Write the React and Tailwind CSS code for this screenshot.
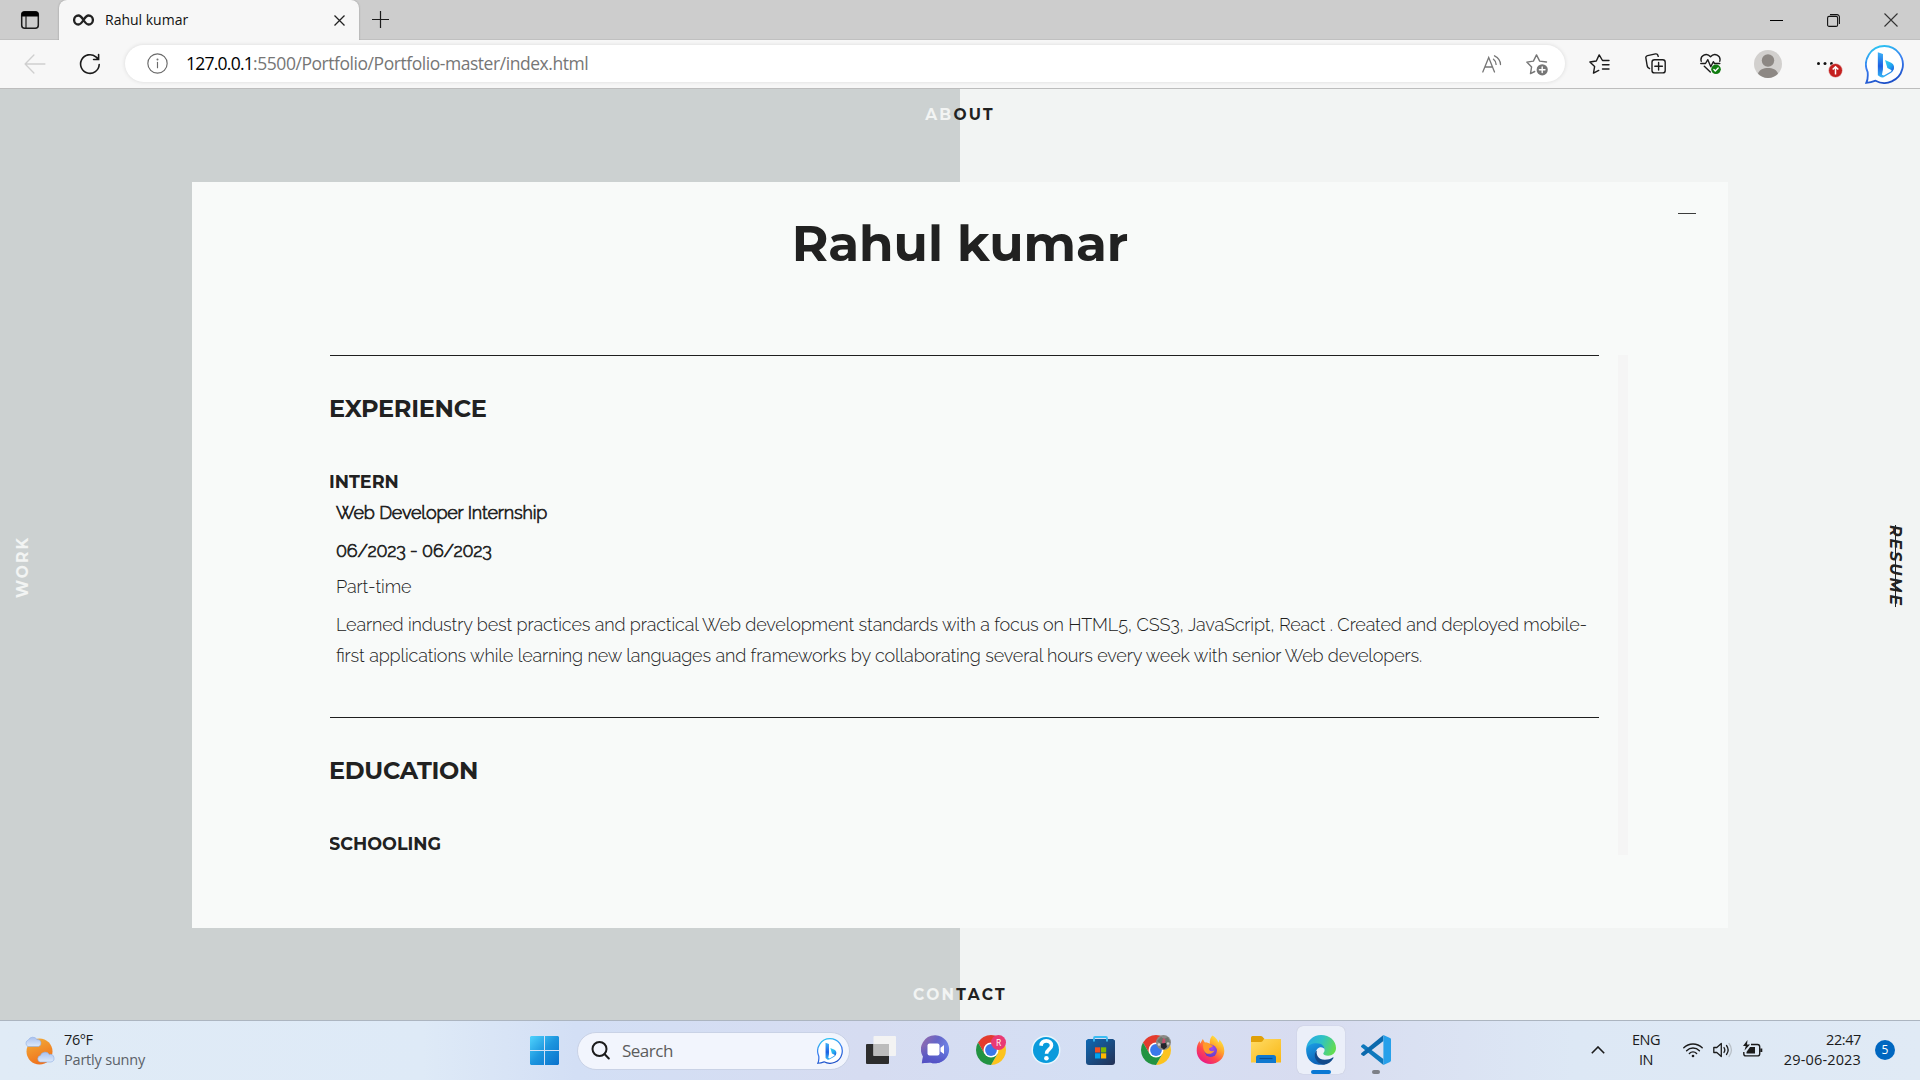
import React, { useId } from "react";

function Line({ size = 20, sw = 1.3, className = "", children }) {
  return (
    <svg width={size} height={size} viewBox="0 0 20 20" fill="none" stroke="currentColor" strokeWidth={sw} strokeLinecap="round" strokeLinejoin="round" className={"shrink-0 " + className}>
      {children}
    </svg>
  );
}

function BingBubble({ size, className = "" }) {
  const id = useId();
  return (
    <svg width={size} height={size} viewBox="0 0 38 38" className={"shrink-0 " + className}>
      <defs>
        <linearGradient id={id + "a"} x1="0.2" y1="0" x2="0.5" y2="1">
          <stop offset="0" stopColor="#2bc8f2" />
          <stop offset="0.5" stopColor="#3a7df0" />
          <stop offset="1" stopColor="#1d50c8" />
        </linearGradient>
        <linearGradient id={id + "b"} x1="0" y1="0" x2="0" y2="1">
          <stop offset="0" stopColor="#3db4f8" />
          <stop offset="0.55" stopColor="#1d5fe2" />
          <stop offset="1" stopColor="#35b8f5" />
        </linearGradient>
        <linearGradient id={id + "c"} x1="0" y1="0" x2="1" y2="1">
          <stop offset="0" stopColor="#35d3ec" />
          <stop offset="0.6" stopColor="#22a8f0" />
          <stop offset="1" stopColor="#1c58dd" />
        </linearGradient>
      </defs>
      <path d="M19 1a18 18 0 1 1-8.7 33.8C7.500 36 4.500 36.800 1.200 36.900 3 34 3 31.500 2.600 26.500A18 18 0 0 1 19 1z" fill="#fff" stroke={`url(#${id}a)`} strokeWidth="1.8" />
      <path d="M12.500 7l5 1.800v15l-1 5.200 1.800.8 7-4 2.500-5.300c.8 3-.2 5.400-2.700 6.900l-6.500 3.700c-1.500.8-2.800.7-4-.2l-2.100-1.500z" fill={`url(#${id}b)`} />
      <path d="M19.500 14.500l6 2.800c3 1.600 3.500 4.800 1.500 7.800l-5.200-2.600z" fill={`url(#${id}c)`} />
    </svg>
  );
}

function Chrome({ children }) {
  return (
    <svg width="30" height="30" viewBox="0 0 30 30">
      <path d="M2.010 7.500A15 15 0 0 1 27.990 7.500H15V15L8.500 18.750z" fill="#e33b2e" />
      <path d="M27.990 7.500A15 15 0 0 1 15 30L21.500 18.750 15 15V7.500z" fill="#fcc31e" />
      <path d="M15 30A15 15 0 0 1 2.010 7.500L8.500 18.750 15 15 21.500 18.750z" fill="#229342" />
      <circle cx="15" cy="15" r="7.500" fill="#fff" />
      <circle cx="15" cy="15" r="5.900" fill="#3a78ea" />
      {children}
    </svg>
  );
}

function WindowsStart() {
  return (
    <svg width="29" height="29" viewBox="0 0 29 29">
      <defs>
        <linearGradient id="win" x1="0" y1="0" x2="29" y2="29" gradientUnits="userSpaceOnUse">
          <stop offset="0" stopColor="#4fd3fd" />
          <stop offset="0.5" stopColor="#1c95de" />
          <stop offset="1" stopColor="#0a71cc" />
        </linearGradient>
      </defs>
      <path d="M1 0H14v14H0V1zM15 0h13L29 1V14H15zM0 15h14v14H1L0 28zM15 15h14v13L28 29H15z" fill="url(#win)" />
    </svg>
  );
}

function TaskView() {
  return (
    <svg width="30" height="28" viewBox="0 0 30 28">
      <rect x="0" y="8" width="23" height="20" rx="1" fill="#2d2d2d" />
      <rect x="7.500" y="0" width="22.500" height="20" rx="1" fill="#f3f3f3" />
      <rect x="7.500" y="8" width="15.500" height="12" fill="#bcbcbc" />
    </svg>
  );
}

function TeamsChat() {
  return (
    <svg width="29" height="29" viewBox="0 0 29 29">
      <defs>
        <linearGradient id="teams" x1="0" y1="0" x2="1" y2="0.6">
          <stop offset="0" stopColor="#9c6aa6" />
          <stop offset="0.5" stopColor="#6666c8" />
          <stop offset="1" stopColor="#6f8df0" />
        </linearGradient>
        <linearGradient id="teams2" x1="0" y1="0" x2="0" y2="1">
          <stop offset="0.4" stopColor="#5050bf" stopOpacity="0" />
          <stop offset="1" stopColor="#5350c4" />
        </linearGradient>
      </defs>
      <path d="M14.500.3a14 14 0 1 1-5.300 27.100L.8 28.300 2 21.500A14 14 0 0 1 14.500.3z" fill="url(#teams)" />
      <path d="M14.500.3a14 14 0 1 1-5.300 27.100L.8 28.300 2 21.500A14 14 0 0 1 14.500.3z" fill="url(#teams2)" />
      <rect x="6.500" y="8.500" width="12" height="12" rx="2" fill="#fff" />
      <path d="M19.500 12.800l3.500-2.700v9l-3.500-2.700z" fill="#fff" />
    </svg>
  );
}

function HelpCircle() {
  return (
    <svg width="30" height="30" viewBox="0 0 30 30">
      <circle cx="15" cy="15" r="14.500" fill="#e8f6fd" />
      <circle cx="15" cy="15" r="13" fill="#0a9bdc" />
      <path d="M10 10.800c.3-3 2.300-4.900 5.300-4.900 3.100 0 5.200 1.800 5.200 4.500 0 4-5 4.200-5 8.400" fill="none" stroke="#fff" strokeWidth="3.600" />
      <circle cx="15.400" cy="23.200" r="2.300" fill="#fff" />
    </svg>
  );
}

function Store() {
  return (
    <svg width="29" height="30" viewBox="0 0 29 30">
      <defs>
        <linearGradient id="store" x1="0" y1="0" x2="1" y2="1">
          <stop offset="0" stopColor="#0f69b4" />
          <stop offset="1" stopColor="#243154" />
        </linearGradient>
      </defs>
      <path d="M0 5.500L2 4h25l2 1.500V27a3 3 0 0 1-3 3H3a3 3 0 0 1-3-3z" fill="url(#store)" />
      <path d="M8 6.500V3a1 1 0 0 1 1-1h11a1 1 0 0 1 1 1v3.500" fill="none" stroke="#3cbcf2" strokeWidth="1.800" />
      <path d="M9 12.300h5.200v5.200H9z" fill="#f25022" />
      <path d="M15 12.300h5.200v5.200H15z" fill="#7fba00" />
      <path d="M9 18.300h5.200v5.200H9z" fill="#00a4ef" />
      <path d="M15 18.300h5.200v5.200H15z" fill="#ffb900" />
    </svg>
  );
}

function Firefox() {
  return (
    <svg width="29" height="30" viewBox="0 0 29 30">
      <defs>
        <linearGradient id="ff" x1="0.85" y1="0.05" x2="0.2" y2="0.95">
          <stop offset="0" stopColor="#fff044" />
          <stop offset="0.35" stopColor="#ffa62b" />
          <stop offset="0.65" stopColor="#ff4a4a" />
          <stop offset="1" stopColor="#e8178a" />
        </linearGradient>
        <radialGradient id="ffc" cx="0.6" cy="0.3" r="0.8">
          <stop offset="0" stopColor="#a04cf0" />
          <stop offset="1" stopColor="#5a3bc0" />
        </radialGradient>
      </defs>
      <path d="M16.500.5c3.300 2 5 4.400 5.800 7 .8-.8 1-1.900 1-2.900 3 3 5 7 5 11.400C28.300 23.500 22 29 14.500 29S.7 23.300.7 15.800c0-4.200 1-7.300 2.900-9.800l.7 2.500L6.800 4l2 3.500c2 0 3.500.3 5 1.200-.2-3.600.6-6.200 2.700-8.200z" fill="url(#ff)" />
      <circle cx="14.700" cy="15.800" r="6.200" fill="url(#ffc)" />
      <path d="M7 8.500c2.500-1.300 5-1 6.800.7 1 .8 2.200 1.400 3.300 1.600-.5 1.800-3.800 1.500-4 3.200-.2 1.800 2.500 3 5.400 1.500-2 4-7.500 4.500-9.800 1.200C7 14.200 7 11.300 7 8.500z" fill="#ff9a2b" />
    </svg>
  );
}

function Explorer() {
  return (
    <svg width="30" height="27" viewBox="0 0 30 27">
      <defs>
        <linearGradient id="fold" x1="0" y1="0" x2="1" y2="1">
          <stop offset="0" stopColor="#ffdc66" />
          <stop offset="1" stopColor="#f9b715" />
        </linearGradient>
      </defs>
      <path d="M0 1.500A1.500 1.500 0 0 1 1.500 0h8.300c.7 0 1.200.2 1.700.8L13.500 3H30v5H0z" fill="#e0a008" />
      <path d="M0 6h9.500c1 0 1.600-.3 2.200-1L13 3h17v23.500H0z" fill="url(#fold)" />
      <path d="M5 27v-5.500A2.500 2.500 0 0 1 7.500 19h15a2.500 2.500 0 0 1 2.500 2.500V27z" fill="#0f78cf" />
      <path d="M8.500 22.500h13" stroke="#0b4f94" strokeWidth="1.200" />
    </svg>
  );
}

function Edge() {
  return (
    <svg width="30" height="30" viewBox="0 0 24 24">
      <defs>
        <linearGradient id="e1" x1="0" y1="0.2" x2="1" y2="0.5">
          <stop offset="0" stopColor="#27a9e8" />
          <stop offset="0.5" stopColor="#2fc2c4" />
          <stop offset="1" stopColor="#62dc50" />
        </linearGradient>
        <linearGradient id="e2" x1="0" y1="0" x2="0.4" y2="1">
          <stop offset="0" stopColor="#1ba0e6" />
          <stop offset="1" stopColor="#0c62b8" />
        </linearGradient>
      </defs>
      <path d="M.1 11.200C.7 4.600 5.600 0 12 0c7 0 12 4.700 12 10.300 0 3.800-3 6.200-6.300 6.200-2.600 0-3.900-.9-3.900-1.700 0-.6 1.100-1 1.100-3C14.900 9 12.300 7.300 9 7.300 5 7.300 2 8.800.1 11.200z" fill="url(#e1)" />
      <path d="M.1 11.200C1.200 8 4.800 6.500 8.600 6.500c4 0 6.300 2.300 6.300 5.200-.6-1.300-1.700-1.900-2.900-1.900-2.300 0-4.300 2.100-4.300 5.100 0 3.800 3.100 7.600 7.500 8.500C13.600 24.200 0 25.500.1 11.200z" fill="url(#e2)" />
      <path d="M8.800 12.300c-1.100 3.500 1.200 7.400 6.300 7.400 2.500 0 4.600-.7 6.300-1.800.4-.2.800.2.500.6-1.700 3-4.300 4.700-7.500 5.300-4.600-.9-8-4.300-7.300-8.700.1-1.200.8-2.200 1.700-2.800z" fill="#114a8b" />
    </svg>
  );
}

function VSCode() {
  return (
    <svg width="30" height="30" viewBox="0 0 30 30">
      <path d="M1.600 9.600a1.300 1.300 0 0 1 1.700-.1L22.400 24v6L.5 12.300a1.200 1.200 0 0 1 0-1.800z" fill="#0f79bd" />
      <path d="M1.600 20.600a1.300 1.300 0 0 0 1.700.1L22.400 6V0L.5 17.900a1.200 1.200 0 0 0 0 1.800z" fill="#0b69ad" />
      <path d="M22.400 0l6.600 3a1.800 1.800 0 0 1 1 1.700v20.600a1.800 1.800 0 0 1-1 1.700l-6.600 3z" fill="#27a0ea" />
    </svg>
  );
}

function Weather() {
  return (
    <svg width="31" height="29" viewBox="0 0 31 29">
      <defs>
        <linearGradient id="sun" x1="0" y1="0" x2="0.4" y2="1">
          <stop offset="0" stopColor="#f2b03a" />
          <stop offset="1" stopColor="#f0731d" />
        </linearGradient>
        <linearGradient id="cloud" x1="0" y1="0" x2="0" y2="1">
          <stop offset="0" stopColor="#a9c1f0" />
          <stop offset="1" stopColor="#dce9fb" />
        </linearGradient>
      </defs>
      <circle cx="15.500" cy="15.500" r="13" fill="url(#sun)" />
      <path d="M4 10.500a3.500 3.500 0 0 1 .3-6.500A5 5 0 0 1 13 3.500a3.600 3.600 0 0 1 1.500 7z" fill="url(#cloud)" stroke="#8faee3" strokeWidth="0.600" />
      <path d="M16 26a3.400 3.400 0 0 1 .3-6.500 5 5 0 0 1 9-1 3.800 3.800 0 0 1 1.700 7.500z" fill="url(#cloud)" stroke="#8faee3" strokeWidth="0.600" />
    </svg>
  );
}

function TabStrip() {
  return (
    <div className="flex h-10 bg-[#cdcdcd] shadow-[inset_0_-1px_0_#c0c0c0]">
      <div className="flex w-[59px] items-center pl-5">
        <svg width="20" height="20" viewBox="0 0 20 20">
          <rect x="1.700" y="1.700" width="16.600" height="16.600" rx="3" fill="none" stroke="#1b1b1b" strokeWidth="1.500" />
          <path d="M1.500 6.500V4.500a3 3 0 0 1 3-3h11a3 3 0 0 1 3 3v2z" />
          <path d="M6 6v12" stroke="#1b1b1b" strokeWidth="1.200" />
        </svg>
      </div>
      <div className="flex w-[300px] items-center rounded-t-lg bg-[#f7f7f7] pl-3.5 shadow-[0_0_2px_rgba(0,0,0,0.3)]">
        <svg width="21" height="12" viewBox="0 0 21 12" fill="none" stroke="#222" strokeWidth="2.300">
          <path d="M10.500 6C8.800 3.300 7.500 1.500 5.400 1.500a4.300 4.500 0 0 0 0 9c2.100 0 3.400-1.800 5.100-4.500s3-4.500 5.100-4.500a4.300 4.500 0 0 1 0 9c-2.100 0-3.400-1.800-5.100-4.500z" />
        </svg>
        <span className="ml-[11px] w-[218px] text-sm leading-5 text-[#111]">Rahul kumar</span>
        <svg width="11" height="11" viewBox="0 0 11 11" className="ml-[11px] shrink-0" stroke="#222" strokeWidth="1.300">
          <path d="M.5.500l10 10M10.500.5l-10 10" />
        </svg>
      </div>
      <svg width="17" height="17" viewBox="0 0 17 17" className="mt-[11px] ml-[13px]" stroke="#1b1b1b" strokeWidth="1.200">
        <path d="M8.500 0v17M0 8.500h17" />
      </svg>
      <div className="ml-auto flex items-center pr-[22px]">
        <div className="h-px w-[13px] bg-black" />
        <svg width="13" height="13" viewBox="0 0 13 13" className="ml-11" fill="none" stroke="#111" strokeWidth="1.100">
          <rect x="0.600" y="2.400" width="10" height="10" rx="1.500" />
          <path d="M3 .6h7a2.400 2.400 0 0 1 2.400 2.400v7" />
        </svg>
        <svg width="14" height="14" viewBox="0 0 14 14" className="ml-11" stroke="#333" strokeWidth="1.100">
          <path d="M.5.500l13 13M13.500.5l-13 13" />
        </svg>
      </div>
    </div>
  );
}

function Toolbar() {
  return (
    <div className="flex h-[49px] items-center border-b border-[#bdbdbd] bg-[#f7f7f7] pb-px pl-6">
      <Line size={22} sw={1.2} className="text-[#cfcfcf]">
        <path d="M19 10H1M9 1.800L1 10l8 8.200" />
      </Line>
      <svg width="22" height="22" viewBox="0 0 22 22" className="ml-[33px]" fill="none" stroke="#1b1b1b" strokeWidth="1.600" strokeLinecap="round">
        <path d="M20.200 11.500a9.300 9.300 0 1 1-3.300-7.600l2.400 2.300M19.600 1.500v5h-5" />
      </svg>
      <div className="ml-[24px] flex h-[37px] w-[1440px] items-center rounded-full bg-white pl-[22px] shadow-[0_0_4px_rgba(0,0,0,0.12)]">
        <Line size={21} sw={1.1} className="text-[#6a6a6a]">
          <circle cx="10" cy="10" r="9.200" />
          <path d="M10 9v5" />
          <circle cx="10" cy="6.200" r="0.400" />
        </Line>
        <span className="mt-[-1px] ml-[18px] text-[17.500px] leading-6 tracking-[-0.45px] text-[#767676]">
          <span className="tracking-[-0.75px] text-black">127.0.0.1</span>:5500/Portfolio/Portfolio-master/index.html
        </span>
        <svg width="20" height="18" viewBox="0 0 20 18" className="mr-[24px] ml-auto" fill="none" stroke="#767676" strokeWidth="1.300" strokeLinecap="round">
          <path d="M.8 17L6.700 2.500 12.500 17M2.800 12h7.800M11.500 4.200c1.700 1.300 2.500 3 2.600 5.200M12.500.8c3.800 2 6 5 6 8.700" />
        </svg>
        <svg width="23" height="22" viewBox="0 0 23 22" className="mt-0.5 mr-[16px]" fill="none" stroke="#767676" strokeWidth="1.400" strokeLinejoin="round" strokeLinecap="round">
          <path d="M20.500 8l-6.800-.9L10.500.9 7.400 7.100.8 8.100l4.800 4.800-1.100 6.700 4.200-2.100" />
          <circle cx="16.200" cy="15.800" r="5.600" fill="#767676" stroke="none" />
          <path d="M16.200 13v5.600M13.400 15.800H19" stroke="#fff" />
        </svg>
      </div>
      <svg width="21" height="20" viewBox="0 0 21 20" className="ml-6" fill="none" stroke="#1b1b1b" strokeWidth="1.400" strokeLinejoin="round" strokeLinecap="round">
        <path d="M20 6.500h-6.500L10.200.9 7.300 7 .9 8l4.700 4.600-1.100 6.500 5.200-2.700M13.500 10.800H20M13.500 15H20" />
      </svg>
      <svg width="21" height="21" viewBox="0 0 21 21" className="ml-[35px]" fill="none" stroke="#1b1b1b" strokeWidth="1.400" strokeLinejoin="round" strokeLinecap="round">
        <rect x="7" y="6.700" width="13.200" height="13.200" rx="2.500" />
        <path d="M13.600 9.500v7.600M9.800 13.300h7.600M4.500 15.500c-1.500-.3-2-1.200-2.300-2.500L.9 5.200c-.3-1.300.3-2.300 1.700-2.600L10.500.9c1.400-.3 2.300.4 2.700 2.500" />
      </svg>
      <svg width="22" height="22" viewBox="0 0 22 22" className="ml-[34px]" fill="none" stroke="#1b1b1b" strokeWidth="1.400" strokeLinejoin="round" strokeLinecap="round">
        <path d="M1.200 8.200C-.2 2.500 6.500-1 10.500 3.700 14.500-1 21.200 2.500 19.800 8.200M.8 10.500h4.700l2.300-3.800 3 7 2.500-5 1.200 1.800h5.300M4.300 13.200l6 5.700" />
        <circle cx="16" cy="16.300" r="4.800" fill="#107c10" stroke="none" />
        <path d="M13.900 16.500l1.400 1.400 2.900-3" stroke="#fff" />
      </svg>
      <svg width="28" height="28" viewBox="0 0 28 28" className="ml-[32px]">
        <circle cx="14" cy="14" r="14" fill="#d2d0ce" />
        <circle cx="14" cy="10.500" r="6.200" fill="#8d8884" />
        <path d="M4 23.800c1.500-4.200 5.300-5.800 10-5.800s8.500 1.600 10 5.800a14 14 0 0 1-20 0z" fill="#8d8884" />
      </svg>
      <svg width="28" height="28" viewBox="0 0 28 28" className="ml-[34px]">
        <g fill="#111">
          <circle cx="2.500" cy="13.500" r="1.500" />
          <circle cx="9" cy="13.500" r="1.500" />
          <circle cx="15.500" cy="13.500" r="1.500" />
        </g>
        <circle cx="19.500" cy="20.500" r="7" fill="#c4201f" stroke="#f7f7f7" strokeWidth="0.600" />
        <path d="M19.500 24.500v-7.500M16.700 19.500l2.800-2.800 2.800 2.800" fill="none" stroke="#fff" strokeWidth="1.500" />
      </svg>
      <BingBubble size={39} className="mt-0.5 ml-[21px]" />
    </div>
  );
}

function Section({ title, subtitle, children }) {
  return (
    <section className="h-[362px] border-t border-[#1f1f1f]">
      <h2 className="mt-8 -ml-px text-2xl leading-[42px] font-bold tracking-[-0.3px]">{title}</h2>
      <h3 className="mt-10 -ml-px text-[17.600px] leading-6 font-bold">{subtitle}</h3>
      {children}
    </section>
  );
}

function Page() {
  return (
    <main className="flex h-[931px] flex-col bg-[linear-gradient(to_right,#ccd1d1_50%,#f2f4f3_50%)] font-[Montserrat,Inter,sans-serif] text-[#212121]">
      <div className="h-[93px] pt-3.5 text-center text-[15.500px] leading-6 font-bold tracking-[2.200px]">
        <span className="text-[#f2f4f3]">AB</span>OUT
      </div>
      <div className="grid h-[746px] grid-cols-[192px_1536px_192px]">
        <div className="flex items-center pt-6 pl-[11px]">
          <span className="rotate-180 text-[15.500px] leading-6 font-bold tracking-[2.100px] text-[#f2f4f3] [writing-mode:vertical-rl]">WORK</span>
        </div>
        <div className="relative bg-[#f8faf9] pt-8">
          <h1 className="text-center text-[50px] leading-[60px] font-bold">Rahul kumar</h1>
          <div className="absolute top-[31px] right-8 h-px w-[18px] bg-[#3c3c3c]" />
          <div className="mt-[81px] ml-[138px] flex h-[500px] w-[1298px] justify-between overflow-hidden">
            <div className="w-[1269px]">
              <Section title="EXPERIENCE" subtitle="INTERN">
                <div className="pt-[3px] pl-1.5 font-[Raleway,Lato,sans-serif] text-lg leading-[31px] font-light tracking-[-0.140px] [font-feature-settings:'liga']">
                  <p className="[-webkit-text-stroke:0.700px_#212121]">Web Developer Internship</p>
                  <p className="mt-[7px] [-webkit-text-stroke:0.700px_#212121]">06/2023 - 06/2023</p>
                  <p className="mt-[5px]">Part-time</p>
                  <p className="mt-[7px] whitespace-nowrap">
                    Learned industry best practices and practical Web development standards with a focus on HTML5, CSS3, JavaScript, React . Created and deployed mobile-
                    <br />
                    first applications while learning new languages and frameworks by collaborating several hours every week with senior Web developers.
                  </p>
                </div>
              </Section>
              <Section title="EDUCATION" subtitle="SCHOOLING" />
            </div>
            <div className="w-2.5 bg-[#f5f5f5]" />
          </div>
        </div>
        <div className="flex items-center justify-end pt-[23px] pr-[13px]">
          <span className="text-[15.500px] leading-6 font-bold tracking-[2.200px] italic line-through [writing-mode:vertical-rl]">RESUME</span>
        </div>
      </div>
      <div className="h-[92px] pt-[55px] text-center text-[15.500px] leading-6 font-bold tracking-[2.300px]">
        <span className="text-[#f2f4f3]">CON</span>TACT
      </div>
    </main>
  );
}

function Cell({ children }) {
  return <div className="flex w-[55px] items-center justify-center">{children}</div>;
}

function Taskbar() {
  return (
    <footer className="flex h-[60px] items-stretch border-t border-[#acb5c0] bg-[linear-gradient(to_right,#e0ebf6_0%,#deeaf7_22%,#d3dff5_30%,#d6dcf1_45%,#d4dff4_58%,#d8dcf0_68%,#dde8f5_82%,#e0eaf5_100%)] text-[14.500px] text-[#1b1b1b]">
      <div className="flex w-[530px] items-center pl-6">
        <Weather />
        <div className="mt-[-2px] ml-[9px] leading-5">
          <div className="tracking-[-0.4px]">76°F</div>
          <div className="tracking-[-0.2px] text-[#5b6168]">Partly sunny</div>
        </div>
      </div>
      <div className="flex items-center">
        <WindowsStart />
      </div>
      <div className="ml-[18px] flex h-[38px] w-[273px] items-center self-center rounded-full border border-[#c9d2e6] bg-[#f2f5fd] pr-1.5 pl-[13px]">
        <svg width="19" height="19" viewBox="0 0 19 19" fill="none" stroke="#1b1b1b" strokeWidth="2" strokeLinecap="round">
          <circle cx="8.500" cy="8" r="7" />
          <path d="M13.500 13l4.300 4.500" />
        </svg>
        <span className="ml-3 text-[17px] tracking-[-0.5px] text-[#5c5c5c]">Search</span>
        <BingBubble size={26} className="ml-auto" />
      </div>
      <div className="ml-[3px] flex pb-0.5">
        <Cell><TaskView /></Cell>
        <Cell><TeamsChat /></Cell>
        <Cell>
          <Chrome>
            <circle cx="22.500" cy="7.500" r="7.500" fill="#e93a74" />
            <text x="22.500" y="10.500" fontSize="8.500" textAnchor="middle" fill="#fff">R</text>
          </Chrome>
        </Cell>
        <Cell><HelpCircle /></Cell>
        <Cell><Store /></Cell>
        <Cell>
          <Chrome>
            <circle cx="22.500" cy="7.500" r="7.500" fill="#8b8a86" />
            <path d="M16 6l4-4 3 2 4-2 2 5-3 2-3-2-3 2z" fill="#6a756b" />
            <path d="M22 3l2.500 1.500L24 8l-3 .5z" fill="#c94b6c" />
            <path d="M20 8.500l5-.5 1 4-3 2.500-3-2z" fill="#23232b" />
            <circle cx="18" cy="9.500" r="1.300" fill="#d8d5d2" />
            <circle cx="27" cy="8.500" r="1.200" fill="#c9c6c4" />
          </Chrome>
        </Cell>
        <Cell><Firefox /></Cell>
        <Cell><Explorer /></Cell>
        <Cell>
          <div className="relative flex size-12 items-center justify-center rounded-md bg-[#ebeff9] shadow-[0_0_1px_rgba(0,0,0,0.2)]">
            <Edge />
            <div className="absolute bottom-0 h-1 w-5 rounded-full bg-[#0a78d4]" />
          </div>
        </Cell>
        <Cell>
          <div className="relative flex size-12 items-center justify-center">
            <VSCode />
            <div className="absolute bottom-0 h-1 w-2 rounded-full bg-[#7d8087]" />
          </div>
        </Cell>
      </div>
      <div className="ml-auto flex items-center pr-[25px] pb-px">
        <svg width="14" height="8" viewBox="0 0 14 8" fill="none" stroke="#1b1b1b" strokeWidth="1.600">
          <path d="M.8 7.200L7 1l6.200 6.200" />
        </svg>
        <div className="ml-[25px] w-8 text-center leading-5 tracking-[-0.5px]">
          <div>ENG</div>
          <div>IN</div>
        </div>
        <svg width="20" height="16" viewBox="0 0 20 16" className="ml-[21px]" fill="none" stroke="#1b1b1b" strokeWidth="1.400" strokeLinecap="round">
          <path d="M.8 5.800a13 13 0 0 1 18.400 0M3.600 8.700a9 9 0 0 1 12.800 0M6.400 11.400a5.100 5.100 0 0 1 7.200 0" />
          <circle cx="10" cy="14" r="1.300" fill="#1b1b1b" stroke="none" />
        </svg>
        <svg width="20" height="16" viewBox="0 0 20 16" className="ml-2.5" fill="none" stroke="#1b1b1b" strokeWidth="1.300" strokeLinecap="round" strokeLinejoin="round">
          <path d="M.8 5.500h3L8.300 1.500v13l-4.500-4h-3zM11 5.500c1 1.500 1 3.500 0 5M13.500 3.500c2 2.700 2 6.300 0 9" />
          <path d="M16 1.500c3 4 3 9 0 13" stroke="#b9c0c8" />
        </svg>
        <svg width="21" height="18" viewBox="0 0 21 18" className="mb-0.5 ml-[9px]" fill="none" stroke="#1b1b1b" strokeWidth="1.400">
          <path d="M9 4.500h6.500a2.200 2.200 0 0 1 2.200 2.200v7a2.200 2.200 0 0 1-2.200 2.200H4a2.200 2.200 0 0 1-2.200-2.200V12" />
          <path d="M19.300 8.500v3.500" strokeWidth="2" />
          <path d="M8 7h5v6.500H4.500V12z" fill="#1b1b1b" stroke="none" />
          <path d="M5.500 0L1 6h2.800L2.500 10.500 8 4.500H5z" fill="#1b1b1b" stroke="none" />
        </svg>
        <div className="mt-[-1px] ml-[18px] w-20 text-right leading-5">
          <div className="tracking-[-0.4px]">22:47</div>
          <div className="tracking-[0.15px]">29-06-2023</div>
        </div>
        <div className="ml-3.5 flex size-5 items-center justify-center rounded-full bg-[#0067c0] text-xs leading-none text-white">5</div>
      </div>
    </footer>
  );
}

export default function App() {
  return (
    <div className="flex h-[1080px] w-[1920px] flex-col overflow-hidden font-['Segoe_UI','Open_Sans',sans-serif]">
      <TabStrip />
      <Toolbar />
      <Page />
      <Taskbar />
    </div>
  );
}
